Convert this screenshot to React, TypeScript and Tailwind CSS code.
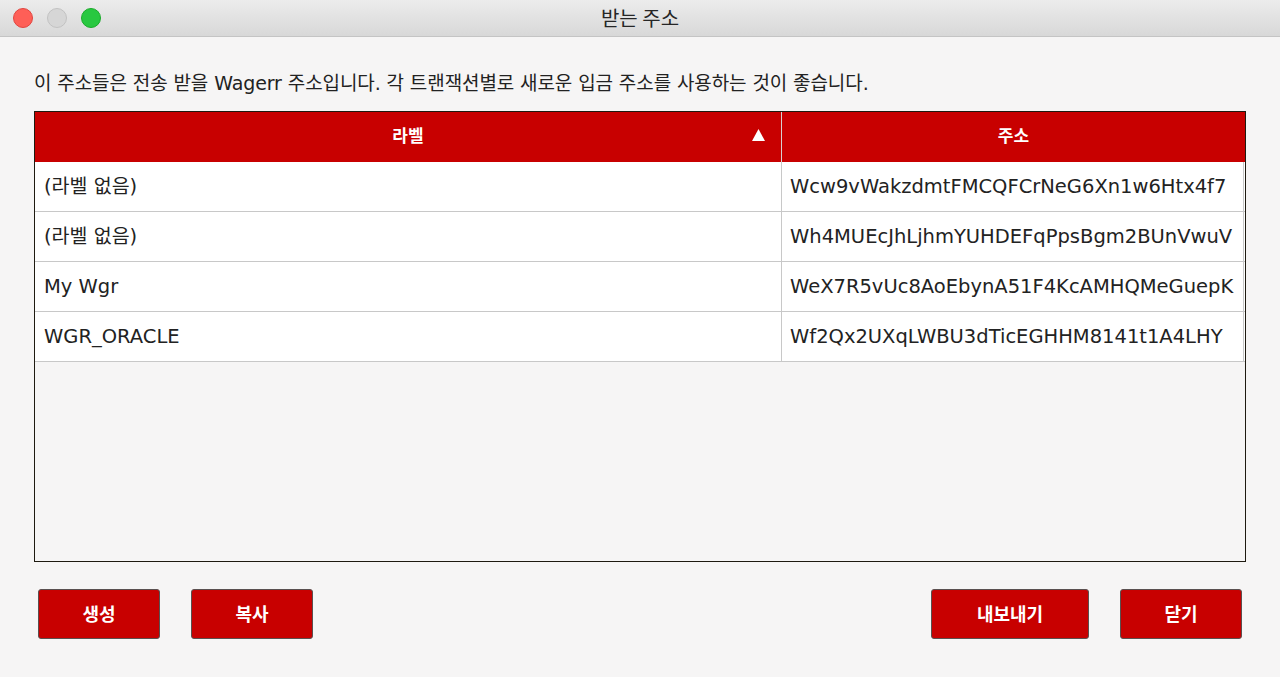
import React from 'react';

const rows = [
  { label: '(라벨 없음)', address: 'Wcw9vWakzdmtFMCQFCrNeG6Xn1w6Htx4f7' },
  { label: '(라벨 없음)', address: 'Wh4MUEcJhLjhmYUHDEFqPpsBgm2BUnVwuV' },
  { label: 'My Wgr', address: 'WeX7R5vUc8AoEbynA51F4KcAMHQMeGuepK' },
  { label: 'WGR_ORACLE', address: 'Wf2Qx2UXqLWBU3dTicEGHHM8141t1A4LHY' },
];

const font = { fontFamily: '"DejaVu Sans", "Noto Sans CJK KR", sans-serif' };

function Button({ children, className }: { children: React.ReactNode; className: string }) {
  return (
    <button
      className={`h-[50px] rounded-[3px] border border-[#5a5050] bg-[#c80000] text-[18px] font-bold text-white ${className}`}
    >
      {children}
    </button>
  );
}

export default function App() {
  return (
    <div className="flex h-[677px] w-[1280px] flex-col overflow-hidden bg-[#f6f5f5] text-[#222]" style={font}>
      {/* Title bar */}
      <div className="relative flex h-[37px] shrink-0 items-center justify-center border-b border-[#c4c4c4] bg-gradient-to-b from-[#ececec] to-[#d8d8d8]">
        <div className="absolute left-[13px] top-[8px] flex gap-[14px]">
          <span className="h-[20px] w-[20px] rounded-full border border-[#e1453f] bg-[#fe5f57]" />
          <span className="h-[20px] w-[20px] rounded-full border border-[#c2c2c2] bg-[#d6d6d6]" />
          <span className="h-[20px] w-[20px] rounded-full border border-[#1aab2a] bg-[#28c840]" />
        </div>
        <span className="text-[20px] text-[#262626]" style={{ fontFamily: '"Noto Sans CJK KR", sans-serif' }}>
          받는 주소
        </span>
      </div>

      <div className="flex flex-1 flex-col px-[34px]">
        <p className="mt-[32px] text-[19px] leading-[28px] text-[#222] tracking-[-0.1px]">
          이 주소들은 전송 받을 Wagerr 주소입니다. 각 트랜잭션별로 새로운 입금 주소를 사용하는 것이 좋습니다.
        </p>

        <div className="mt-[14px] flex h-[451px] flex-col border border-[#1e1a10] bg-[#f6f5f5]">
          <div className="flex h-[50px] shrink-0 bg-[#c80000] text-[17px] font-bold text-white">
            <div className="relative flex w-[747px] items-center justify-center border-r border-[#d8d0d0]">
              <span>라벨</span>
              <svg className="absolute right-[16px] top-[17px]" width="13" height="12" viewBox="0 0 13 12">
                <path d="M6.5 0 L13 12 L0 12 Z" fill="#fff" />
              </svg>
            </div>
            <div className="flex flex-1 items-center justify-center">주소</div>
          </div>
          {rows.map((r, i) => (
            <div key={i} className="flex h-[50px] shrink-0 border-b border-[#c8c8c8] bg-white text-[19.5px] text-[#222]">
              <div className="flex w-[747px] items-center border-r border-[#c8c8c8] pl-[9px]">{r.label}</div>
              <div className="mr-[1px] flex flex-1 items-center border-r border-[#c8c8c8] pl-[8px]">
                {r.address}
              </div>
            </div>
          ))}
        </div>

        <div className="mt-[27px] flex items-center px-[4px]">
          <Button className="w-[122px]">생성</Button>
          <Button className="ml-[31px] w-[122px]">복사</Button>
          <div className="flex-1" />
          <Button className="w-[158px]">내보내기</Button>
          <Button className="ml-[31px] w-[122px]">닫기</Button>
        </div>
      </div>
    </div>
  );
}
